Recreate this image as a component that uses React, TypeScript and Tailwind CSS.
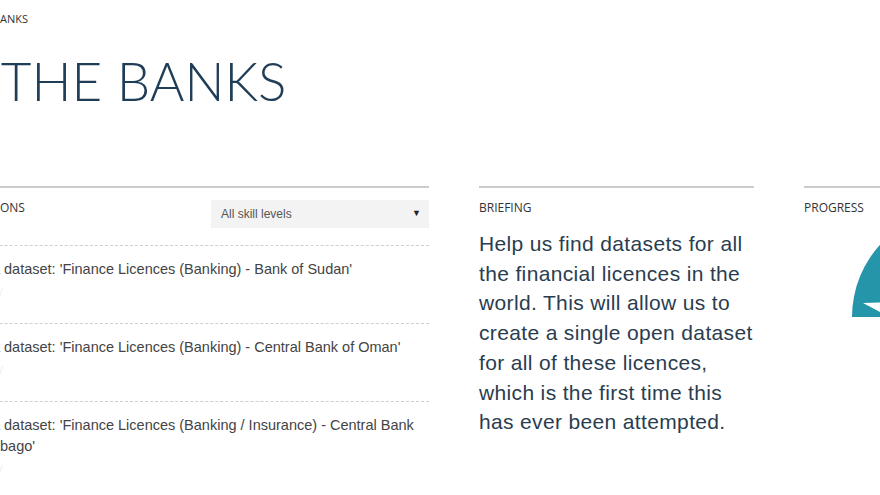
import React from 'react';

const Gauge = () => (
  <svg width="214" height="108" viewBox="0 0 214 108" className="block">
    <path d="M0 107 A107 107 0 0 1 214 107 Z" fill="#2596a9" />
    <path d="M11 93 L140 89 L140 108 L39 108 Z" fill="#ffffff" />
  </svg>
);

const Task = ({ children, last }: { children: React.ReactNode; last?: boolean }) => (
  <div className={`border-t border-dashed border-[#cfcfcf] pt-[13px] ${last ? 'pb-4' : 'h-[78px]'}`}>
    <p className="text-[14.5px] leading-[21px] text-[#444] whitespace-nowrap">{children}</p>
    <p className="text-[12px] leading-[18px] text-[#f1f1f1] mt-[2px]">
      <span className="inline-block w-[174px] text-right">Skill level: easy</span>
    </p>
  </div>
);

const Hidden = ({ children }: { children: React.ReactNode }) => (
  <span className="inline-block w-[171px] text-right">{children}</span>
);

const Label = ({ children }: { children: React.ReactNode }) => (
  <h2 className="text-[12px] leading-[15px] text-[#333] [font-family:Open_Sans,sans-serif] mt-[1px]">{children}</h2>
);

export default function App() {
  return (
    <div className="w-[880px] h-[495px] overflow-hidden bg-white [font-family:Liberation_Sans,Arial,sans-serif]">
      <div className="ml-[-171px] w-[1250px]">
        <div className="pt-[10px] text-[11px] leading-[13px] text-[#333] [font-family:Open_Sans,sans-serif] whitespace-nowrap">
          <span className="inline-block w-[171px] text-right overflow-hidden">CHALLENGES / THE B</span>ANKS
        </div>
        <h1 className="mt-[31px] text-[53px] leading-[50px] font-light text-[#1f3d56] [font-family:Lato,sans-serif] whitespace-nowrap">
          <span className="inline-block w-[159px] text-right">FIND</span> THE BANKS
        </h1>
        <div className="mt-[80px] grid grid-cols-[600px_275px_275px] gap-x-[50px]">
          <section>
            <div className="border-t-2 border-[#cccccc] pt-[11px] flex items-start justify-between h-[59px]">
              <Label>
                <span className="inline-block w-[171px] text-right">SUBMISSI</span>ONS
              </Label>
              <div className="mt-[1px] w-[218px] h-[28px] bg-[#f3f3f3] flex items-center justify-between pl-[10px] pr-[8px] text-[12px] text-[#555]">
                <span>All skill levels</span>
                <span className="text-[9px] text-[#222]">▼</span>
              </div>
            </div>
            <Task>
              <Hidden>Find a</Hidden> dataset: 'Finance Licences (Banking) - Bank of Sudan'
            </Task>
            <Task>
              <Hidden>Find a</Hidden> dataset: 'Finance Licences (Banking) - Central Bank of Oman'
            </Task>
            <Task last>
              <Hidden>Find a</Hidden> dataset: 'Finance Licences (Banking / Insurance) - Central Bank
              <br />
              <Hidden>of Trinidad and To</Hidden>bago'
            </Task>
          </section>
          <section>
            <div className="border-t-2 border-[#cccccc] pt-[11px]">
              <Label>BRIEFING</Label>
              <p className="mt-[14px] text-[21px] leading-[29.7px] tracking-[0.35px] text-[#2a3d4f]">
                Help us find datasets for all the financial licences in the world. This will allow us to create a single open dataset for all of these licences, which is the first time this has ever been attempted.
              </p>
            </div>
          </section>
          <section>
            <div className="border-t-2 border-[#cccccc] pt-[11px]">
              <Label>PROGRESS</Label>
              <div className="mt-[-5px] ml-[48px]">
                <Gauge />
              </div>
            </div>
          </section>
        </div>
      </div>
    </div>
  );
}
